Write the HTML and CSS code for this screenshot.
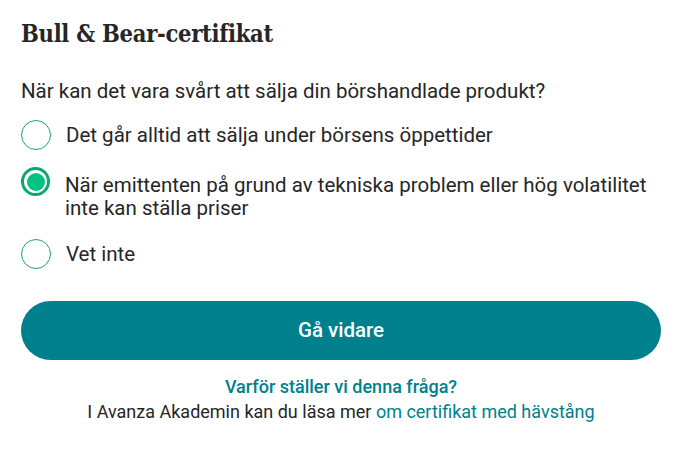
FILE: index.html
```html
<!DOCTYPE html>
<html lang="sv">
<head>
<meta charset="utf-8">
<link rel="stylesheet" href="styles.css">
</head>
<body>
<main class="card">
  <h1 class="title">Bull &amp; Bear-certifikat</h1>
  <p class="question">När kan det vara svårt att sälja din börshandlade produkt?</p>
  <ul class="options">
    <li class="option"><span class="radio"></span><span class="label">Det går alltid att sälja under börsens öppettider</span></li>
    <li class="option selected"><span class="radio"></span><span class="label">När emittenten på grund av tekniska problem eller hög volatilitet inte kan ställa priser</span></li>
    <li class="option last"><span class="radio"></span><span class="label">Vet inte</span></li>
  </ul>
  <button class="next">Gå vidare</button>
  <div class="footer">
    <a class="why">Varför ställer vi denna fråga?</a>
    <p class="more">I Avanza Akademin kan du läsa mer <a class="link">om certifikat med hävstång</a></p>
  </div>
</main>
</body>
</html>
```

FILE: styles.css
```css
* { box-sizing: border-box; }
html, body { margin: 0; padding: 0; background: #fff; }
body {
  font-family: Roboto, "Liberation Sans", sans-serif;
  color: #262626;
}
.card {
  width: 640px;
  margin-left: 21px;
  padding-top: 19px;
}
.title {
  margin: 0;
  font-family: "DejaVu Serif Condensed", "DejaVu Serif", serif;
  font-stretch: condensed;
  font-weight: 700;
  font-size: 23.5px;
  line-height: 30px;
  letter-spacing: -0.3px;
}
.question {
  margin: 30px 0 0;
  font-size: 20.5px;
  line-height: 24px;
}
.options {
  list-style: none;
  margin: 21px 0 0;
  padding: 0;
  display: flex;
  flex-direction: column;
  gap: 24px;
}
.option {
  display: flex;
  align-items: flex-start;
  gap: 15px;
  font-size: 20.5px;
  line-height: 23px;
}
.option.last { margin-top: -1.5px; }
.radio {
  flex: none;
  width: 30px;
  height: 30px;
  border-radius: 50%;
  border: 1.5px solid #1aa57e;
  margin-top: -4px;
  position: relative;
}
.selected .radio {
  width: 29px;
  height: 29px;
  margin-top: -7px;
  border: 3px solid #0ea574;
}
.selected .radio::after {
  content: "";
  position: absolute;
  left: 2.5px;
  top: 2.5px;
  width: 18px;
  height: 18px;
  border-radius: 50%;
  background: #00c381;
}
.next {
  display: flex;
  align-items: center;
  justify-content: center;
  width: 640px;
  height: 59px;
  margin-top: 32px;
  padding: 0;
  border: none;
  border-radius: 30px;
  background: #00808c;
  color: #fff;
  font-family: Roboto, "Liberation Sans", sans-serif;
  font-weight: 500;
  font-size: 20.5px;
}
.footer {
  text-align: center;
  margin-top: 14px;
  font-size: 18px;
  line-height: 25px;
}
.why {
  display: block;
  color: #00808c;
  font-weight: 500;
}
.more { margin: 0; }
.link { color: #00808c; }
```
